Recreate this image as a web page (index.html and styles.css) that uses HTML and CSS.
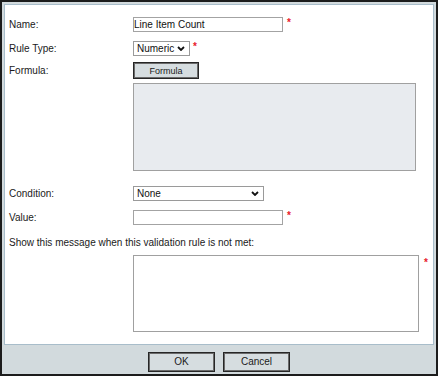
FILE: index.html
```html
<!DOCTYPE html>
<html>
<head>
<meta charset="utf-8">
<link rel="stylesheet" href="styles.css">
</head>
<body>
<div class="dialog">
  <div class="panel">
    <div class="row r-name">
      <div class="lbl">Name:</div>
      <div class="field">
        <input class="txt w150" type="text" value="Line Item Count">
        <span class="req">*</span>
      </div>
    </div>
    <div class="row r-type">
      <div class="lbl">Rule Type:</div>
      <div class="field">
        <div class="select w57">
          <span>Numeric</span>
          <svg class="chev" width="8" height="5" viewBox="0 0 8 5"><path d="M1 1 L4 4 L7 1" fill="none" stroke="#111" stroke-width="1.8"/></svg>
        </div>
        <span class="req req-tight">*</span>
      </div>
    </div>
    <div class="row r-formula">
      <div class="lbl">Formula:</div>
      <div class="field">
        <button class="btn btn-formula" type="button">Formula</button>
      </div>
    </div>
    <div class="row r-formula-area">
      <div class="lbl"></div>
      <div class="field">
        <div class="area formula-area"></div>
      </div>
    </div>
    <div class="row r-cond">
      <div class="lbl">Condition:</div>
      <div class="field">
        <div class="select w131">
          <span>None</span>
          <svg class="chev" width="8" height="5" viewBox="0 0 8 5"><path d="M1 1 L4 4 L7 1" fill="none" stroke="#111" stroke-width="1.8"/></svg>
        </div>
      </div>
    </div>
    <div class="row r-value">
      <div class="lbl">Value:</div>
      <div class="field">
        <input class="txt w150" type="text" value="">
        <span class="req">*</span>
      </div>
    </div>
    <div class="msg-label">Show this message when this validation rule is not met:</div>
    <div class="row r-msg">
      <div class="lbl"></div>
      <div class="field">
        <div class="area msg-area"></div>
        <span class="req req-wide">*</span>
      </div>
    </div>
  </div>
  <div class="footer">
    <button class="btn btn-foot" type="button">OK</button>
    <button class="btn btn-foot" type="button">Cancel</button>
  </div>
</div>
</body>
</html>
```
FILE: styles.css
```css
* { box-sizing: border-box; }
html, body { margin: 0; padding: 0; background: #ffffff; }
body {
  font-family: "Liberation Sans", Arial, sans-serif;
  font-size: 10px;
  color: #1a1a1a;
}
.dialog {
  width: 438px;
  height: 376px;
  border: 2px solid #1c1c1c;
  background: #d2dadd;
  padding: 2px 2px 0 2px;
  display: flex;
  flex-direction: column;
}
.panel {
  height: 341px;
  background: #ffffff;
  border: 1px solid #a8bdca;
  padding: 0 0 0 4px;
  display: flex;
  flex-direction: column;
}
.row {
  display: flex;
  align-items: center;
}
.lbl {
  width: 124px;
  flex: none;
  line-height: 12px;
}
.field {
  display: flex;
  align-items: flex-start;
}
.req {
  color: #e8202a;
  font-size: 10px;
  font-weight: bold;
  line-height: 10px;
  margin-left: 4px;
  margin-top: 1px;
}
.req-tight { margin-left: 3px; }
.req-wide { margin-left: 5px; margin-top: 3px; }

.r-name { margin-top: 12px; height: 15px; }
.r-type { margin-top: 9px; height: 15px; }
.r-formula { margin-top: 6px; height: 17px; }
.r-formula-area { margin-top: 4px; height: 88px; }
.r-cond { margin-top: 15px; height: 15px; }
.r-value { margin-top: 9px; height: 15px; }
.msg-label { margin-top: 12px; line-height: 12px; height: 12px; }
.r-msg { margin-top: 6px; height: 77px; align-items: flex-start; }

.txt {
  height: 15px;
  border: 1px solid #a3a3a3;
  padding: 0;
  margin: 0;
  font-family: "Liberation Sans", Arial, sans-serif;
  font-size: 10px;
  color: #111;
  background: #fff;
  outline: none;
}
.w150 { width: 150px; }
.select {
  height: 15px;
  border: 1px solid #9a9a9a;
  background: #fff;
  display: flex;
  align-items: center;
  justify-content: space-between;
  padding: 0 4px 0 3px;
  color: #111;
  line-height: 12px;
}
.w57 { width: 57px; }
.w131 { width: 131px; }
.chev { display: block; }

.btn {
  font-family: "Liberation Sans", Arial, sans-serif;
  color: #1a1a1a;
  background: #d6dde0;
  border: 1px solid #262626;
  box-shadow: inset 0 0 0 1px #6a6a6a;
  padding: 0;
  margin: 0;
  line-height: 12px;
}
.btn-formula {
  width: 66px;
  height: 17px;
  font-size: 9px;
}
.area {
  border: 1px solid #a0a0a0;
}
.formula-area {
  width: 283px;
  height: 88px;
  background: #e8ebef;
}
.msg-area {
  width: 286px;
  height: 77px;
  background: #fff;
}

.footer {
  height: 29px;
  display: flex;
  justify-content: center;
  align-items: flex-start;
  gap: 8px;
  padding-top: 7px;
}
.btn-foot {
  width: 67px;
  height: 20px;
  font-size: 10px;
}
```
